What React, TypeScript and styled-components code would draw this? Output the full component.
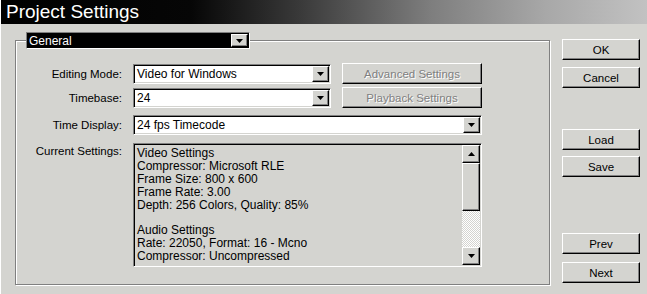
import React from "react";
import styled, { createGlobalStyle, css } from "styled-components";

const FACE = "#d4d4d0";

const GlobalStyle = createGlobalStyle`
  html, body { margin: 0; padding: 0; background: ${FACE}; }
  body { font-family: "Liberation Sans", Arial, sans-serif; }
  * { box-sizing: border-box; }
`;

const raised = css`
  border: 1px solid;
  border-color: #fff #000 #000 #fff;
  box-shadow: inset -1px -1px 0 #808080;
  background: ${FACE};
`;

const sunken = css`
  border: 1px solid;
  border-color: #808080 #fff #fff #808080;
  box-shadow: inset 1px 1px 0 #000, inset -1px -1px 0 ${FACE};
  padding: 1px;
`;

const Dialog = styled.div`
  width: 647px;
  height: 294px;
  background: ${FACE};
  border-left: 1px solid #fff;
  display: flex;
  flex-direction: column;
  overflow: hidden;
`;

const TitleBar = styled.div`
  height: 24px;
  flex: none;
  display: flex;
  align-items: center;
  padding-left: 5px;
  color: #fff;
  font-size: 19px;
  background: linear-gradient(
    90deg,
    #000 0px,
    #060606 190px,
    #3a3a3a 300px,
    #7e7e7e 430px,
    #a8a8a8 545px,
    #c2c2c2 647px
  );
`;

const Body = styled.div`
  display: flex;
  align-items: flex-start;
  padding-left: 14px;
`;

const GroupBox = styled.div`
  margin-top: 16px;
  width: 535px;
  height: 245px;
  border: 1px solid #808080;
  box-shadow: inset 1px 1px 0 #fff, 1px 1px 0 #fff;
  display: flex;
  flex-direction: column;
`;

const HeaderSelect = styled.div`
  margin: -9px 0 0 10px;
  width: 224px;
  height: 17px;
  ${sunken};
  box-shadow: none;
  background: #000;
  color: #fff;
  font-size: 12px;
  display: flex;
  align-items: center;
  justify-content: space-between;
  padding: 0 1px 0 2px;
`;

const FormRow = styled.div<{ $mt: number }>`
  display: grid;
  grid-template-columns: 106px 349px;
  column-gap: 11px;
  align-items: center;
  margin-top: ${(p) => p.$mt}px;
`;

const Label = styled.div<{ $top?: boolean }>`
  text-align: right;
  font-size: 11.5px;
  color: #000;
  white-space: nowrap;
  align-self: ${(p) => (p.$top ? "start" : "center")};
  padding-top: ${(p) => (p.$top ? 2 : 0)}px;
`;

const FieldPair = styled.div`
  display: flex;
  gap: 11px;
  align-items: center;
`;

const Select = styled.div<{ $w: number }>`
  width: ${(p) => p.$w}px;
  height: 20px;
  ${sunken};
  background: #fff;
  display: flex;
  align-items: center;
  justify-content: space-between;
  font-size: 12px;
  color: #000;
`;

const SelectText = styled.span`
  padding-left: 2px;
`;

const ArrowButton = styled.div<{ $h?: number; $w?: number }>`
  width: ${(p) => p.$w ?? 17}px;
  height: ${(p) => p.$h ?? 16}px;
  ${raised};
  display: flex;
  align-items: center;
  justify-content: center;
  flex: none;
`;

const PushButton = styled.button<{ $w?: number; $mt?: number }>`
  width: ${(p) => (p.$w ? `${p.$w}px` : "100%")};
  height: 21px;
  margin: ${(p) => p.$mt ?? 0}px 0 0 0;
  padding: 0;
  ${raised};
  font-family: inherit;
  font-size: 11.5px;
  color: #000;
  cursor: default;
  &:disabled {
    color: #808080;
    text-shadow: 1px 1px 0 #fff;
  }
`;

const SettingsBox = styled.div`
  width: 349px;
  height: 124px;
  ${sunken};
  background: ${FACE};
  display: flex;
`;

const SettingsText = styled.div`
  flex: 1;
  padding: 2px 2px 0;
  font-size: 12px;
  line-height: 12.9px;
  white-space: pre;
  color: #000;
  overflow: hidden;
`;

const ScrollBar = styled.div`
  width: 18px;
  display: flex;
  flex-direction: column;
  flex: none;
`;

const ScrollThumb = styled.div`
  height: 48px;
  ${raised};
`;

const ScrollTrack = styled.div`
  flex: 1;
  background-color: #fff;
  background-image: repeating-conic-gradient(${FACE} 0 25%, #fff 0 50%);
  background-size: 2px 2px;
`;

const SideColumn = styled.div`
  margin: 15px 0 0 12px;
  width: 78px;
  display: flex;
  flex-direction: column;
`;

const Arrow = ({ up }: { up?: boolean }) => (
  <svg width="7" height="4" viewBox="0 0 7 4">
    <polygon points={up ? "0,4 7,4 3.5,0" : "0,0 7,0 3.5,4"} fill="#000" />
  </svg>
);

const settings = `Video Settings
Compressor: Microsoft RLE
Frame Size: 800 x 600
Frame Rate: 3.00
Depth: 256 Colors, Quality: 85%

Audio Settings
Rate: 22050, Format: 16 - Mcno
Compressor: Uncompressed`;

export default function App() {
  return (
    <>
      <GlobalStyle />
      <Dialog>
        <TitleBar>Project Settings</TitleBar>
        <Body>
          <GroupBox>
            <HeaderSelect>
              <span>General</span>
              <ArrowButton $h={13}>
                <Arrow />
              </ArrowButton>
            </HeaderSelect>

            <FormRow $mt={14}>
              <Label>Editing Mode:</Label>
              <FieldPair>
                <Select $w={198}>
                  <SelectText>Video for Windows</SelectText>
                  <ArrowButton>
                    <Arrow />
                  </ArrowButton>
                </Select>
                <PushButton $w={140} disabled>
                  Advanced Settings
                </PushButton>
              </FieldPair>
            </FormRow>

            <FormRow $mt={3}>
              <Label>Timebase:</Label>
              <FieldPair>
                <Select $w={198}>
                  <SelectText>24</SelectText>
                  <ArrowButton>
                    <Arrow />
                  </ArrowButton>
                </Select>
                <PushButton $w={140} disabled>
                  Playback Settings
                </PushButton>
              </FieldPair>
            </FormRow>

            <FormRow $mt={7}>
              <Label>Time Display:</Label>
              <Select $w={349}>
                <SelectText>24 fps Timecode</SelectText>
                <ArrowButton>
                  <Arrow />
                </ArrowButton>
              </Select>
            </FormRow>

            <FormRow $mt={8}>
              <Label $top>Current Settings:</Label>
              <SettingsBox>
                <SettingsText>{settings}</SettingsText>
                <ScrollBar>
                  <ArrowButton $h={18} $w={18}>
                    <Arrow up />
                  </ArrowButton>
                  <ScrollThumb />
                  <ScrollTrack />
                  <ArrowButton $h={18} $w={18}>
                    <Arrow />
                  </ArrowButton>
                </ScrollBar>
              </SettingsBox>
            </FormRow>
          </GroupBox>

          <SideColumn>
            <PushButton>OK</PushButton>
            <PushButton $mt={7}>Cancel</PushButton>
            <PushButton $mt={41}>Load</PushButton>
            <PushButton $mt={6}>Save</PushButton>
            <PushButton $mt={56}>Prev</PushButton>
            <PushButton $mt={8}>Next</PushButton>
          </SideColumn>
        </Body>
      </Dialog>
    </>
  );
}
